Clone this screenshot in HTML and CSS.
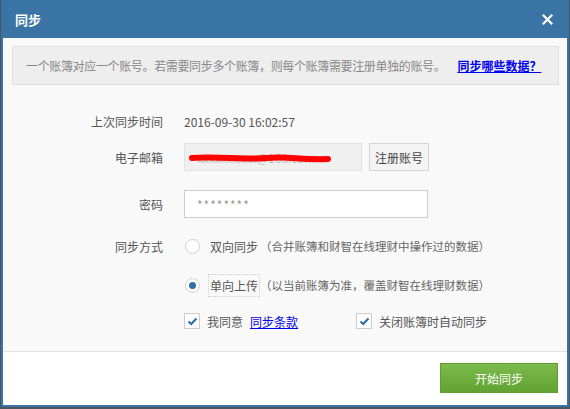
FILE: index.html
```html
<!DOCTYPE html>
<html lang="zh-CN">
<head>
    <meta charset="UTF-8">
    <title>同步</title>
    <link rel="stylesheet" href="styles.css">
</head>
<body>
    <div class="dialog">
        <div class="dialog-header">
            <span class="title">同步</span>
            <span class="close">
                <svg width="11" height="11" viewBox="0 0 11 11"><path d="M1.5 1.5 L9.5 9.5 M9.5 1.5 L1.5 9.5" stroke="#fff" stroke-width="2.2" stroke-linecap="square"/></svg>
            </span>
        </div>
        <div class="dialog-body">
            <div class="notice">
                <span class="notice-text">一个账簿对应一个账号。若需要同步多个账簿，则每个账簿需要注册单独的账号。</span>
                <a href="#" class="link strong">同步哪些数据？</a>
            </div>

            <div class="row row-time">
                <div class="label">上次同步时间</div>
                <div class="value">2016-09-30 16:02:57</div>
            </div>
            <div class="row row-email">
                <div class="label">电子邮箱</div>
                <div class="field">
                    <div class="input input-readonly">
                        <span class="hidden-mail">xxxxxxxxxx@163.com</span>
                        <svg class="scribble" width="150" height="14" viewBox="0 0 150 14"><path d="M5 6 C30 4, 60 8, 80 6 S115 8, 141 7" stroke="#ff0000" stroke-width="6" fill="none" stroke-linecap="round"/></svg>
                    </div>
                    <button class="btn">注册账号</button>
                </div>
            </div>
            <div class="row row-pass">
                <div class="label">密码</div>
                <div class="input input-pass">********</div>
            </div>
            <div class="row row-mode">
                <div class="label">同步方式</div>
                <div class="option">
                    <span class="radio"></span>
                    <span class="opt-name">双向同步</span>
                    <span class="opt-note">（合并账簿和财智在线理财中操作过的数据）</span>
                </div>
            </div>
            <div class="row row-upload">
                <div class="label"></div>
                <div class="option">
                    <span class="radio checked"></span>
                    <span class="opt-name focused">单向上传</span>
                    <span class="opt-note">（以当前账簿为准，覆盖财智在线理财数据）</span>
                </div>
            </div>
            <div class="row row-check">
                <div class="label"></div>
                <div class="checks">
                    <div class="check-item agree">
                        <span class="checkbox"><svg width="11" height="9" viewBox="0 0 11 9"><path d="M1.5 4.5 L4.2 7 L9.5 1.5" stroke="#2f6fa6" stroke-width="2.2" fill="none"/></svg></span>
                        <span>我同意</span>
                        <a href="#" class="link">同步条款</a>
                    </div>
                    <div class="check-item">
                        <span class="checkbox"><svg width="11" height="9" viewBox="0 0 11 9"><path d="M1.5 4.5 L4.2 7 L9.5 1.5" stroke="#2f6fa6" stroke-width="2.2" fill="none"/></svg></span>
                        <span>关闭账簿时自动同步</span>
                    </div>
                </div>
            </div>
        </div>
        <div class="dialog-footer">
            <button class="btn-primary">开始同步</button>
        </div>
    </div>
</body>
</html>
```

FILE: styles.css
```css
body {
    margin: 0;
    background: #4a5560;
    font-family: "Noto Sans CJK SC", "Microsoft YaHei", sans-serif;
    font-size: 12px;
    color: #555;
}
.dialog {
    margin-left: 1px;
    width: 564px;
    height: 405px;
    border: 2px solid #3a74a5;
    border-top: none;
    background: #f9f9f9;
    display: flex;
    flex-direction: column;
}
.dialog-header {
    height: 38px;
    background: #3a74a5;
    display: flex;
    align-items: center;
    justify-content: space-between;
    padding: 0 14px 0 14px;
    margin: 0 -2px;
}
.title {
    color: #fff;
    font-weight: bold;
    font-size: 13px;
}
.close {
    display: flex;
    margin-right: 2px;
}
.dialog-body {
    flex: 1;
    padding: 8px 8px 0 9px;
    border-bottom: 1px solid #e2e2e2;
}
.notice {
    height: 37px;
    background: #eeeeee;
    border: 1px solid #e0e0e0;
    display: flex;
    align-items: center;
    padding: 0 0 0 13px;
    color: #888;
    gap: 12px;
    margin-bottom: 22px;
}
.notice-text {
    letter-spacing: -0.35px;
}
.link {
    color: #0000ee;
    text-decoration: underline;
}
.strong {
    font-weight: bold;
}
.row {
    display: flex;
    align-items: center;
    height: 28px;
}
.label {
    width: 151px;
    text-align: right;
    margin-right: 21px;
    color: #555;
}
.row-email { margin-top: 8px; }
.row-pass { margin-top: 19px; }
.row-mode { margin-top: 14px; }
.row-upload { margin-top: 11px; }
.row-check { margin-top: 8px; }
.value {
    color: #555;
}
.field {
    display: flex;
    gap: 7px;
}
.input {
    height: 26px;
    border: 1px solid #ccc;
    box-sizing: content-box;
    display: flex;
    align-items: center;
    padding-left: 12px;
}
.input-readonly {
    width: 164px;
    background: #f0f0f0;
    border-color: #e2e2e2;
    position: relative;
    color: #bbb;
}
.scribble {
    position: absolute;
    left: 2px;
    top: 8px;
}
.input-pass {
    width: 230px;
    background: #fff;
    color: #999;
    letter-spacing: 1px;
}
.btn {
    height: 28px;
    width: 60px;
    border: 1px solid #d4d4d4;
    background: #f4f4f4;
    color: #444;
    font-family: inherit;
    font-size: 12px;
    padding: 0;
}
.option {
    display: flex;
    align-items: center;
}
.radio {
    width: 13px;
    height: 13px;
    border: 1px solid #d0d0d0;
    border-radius: 50%;
    background: #fff;
    margin: 0 8px 0 1px;
    position: relative;
}
.radio.checked::after {
    content: "";
    position: absolute;
    left: 3px;
    top: 3px;
    width: 7px;
    height: 7px;
    border-radius: 50%;
    background: #2f6fa6;
}
.opt-name {
    color: #555;
    padding: 2px 1px;
    border: 1px dotted transparent;
}
.opt-name.focused {
    border-color: #ccc;
}
.opt-note {
    color: #666;
    font-size: 11.5px;
}
.checks {
    display: flex;
}
.check-item {
    display: flex;
    align-items: center;
    gap: 7px;
}
.check-item.agree {
    width: 172px;
}
.checkbox {
    width: 14px;
    height: 14px;
    border: 1px solid #ccc;
    background: #fff;
    display: flex;
    align-items: center;
    justify-content: center;
}
.dialog-footer {
    height: 53px;
    background: #fff;
    display: flex;
    justify-content: flex-end;
    align-items: flex-start;
    padding: 11px 9px 0 0;
    box-sizing: border-box;
}
.btn-primary {
    width: 118px;
    height: 30px;
    border: 1px solid #5f9c31;
    background: linear-gradient(#7cbb4b, #62a233);
    color: #fff;
    font-family: inherit;
    font-size: 12px;
}
```
